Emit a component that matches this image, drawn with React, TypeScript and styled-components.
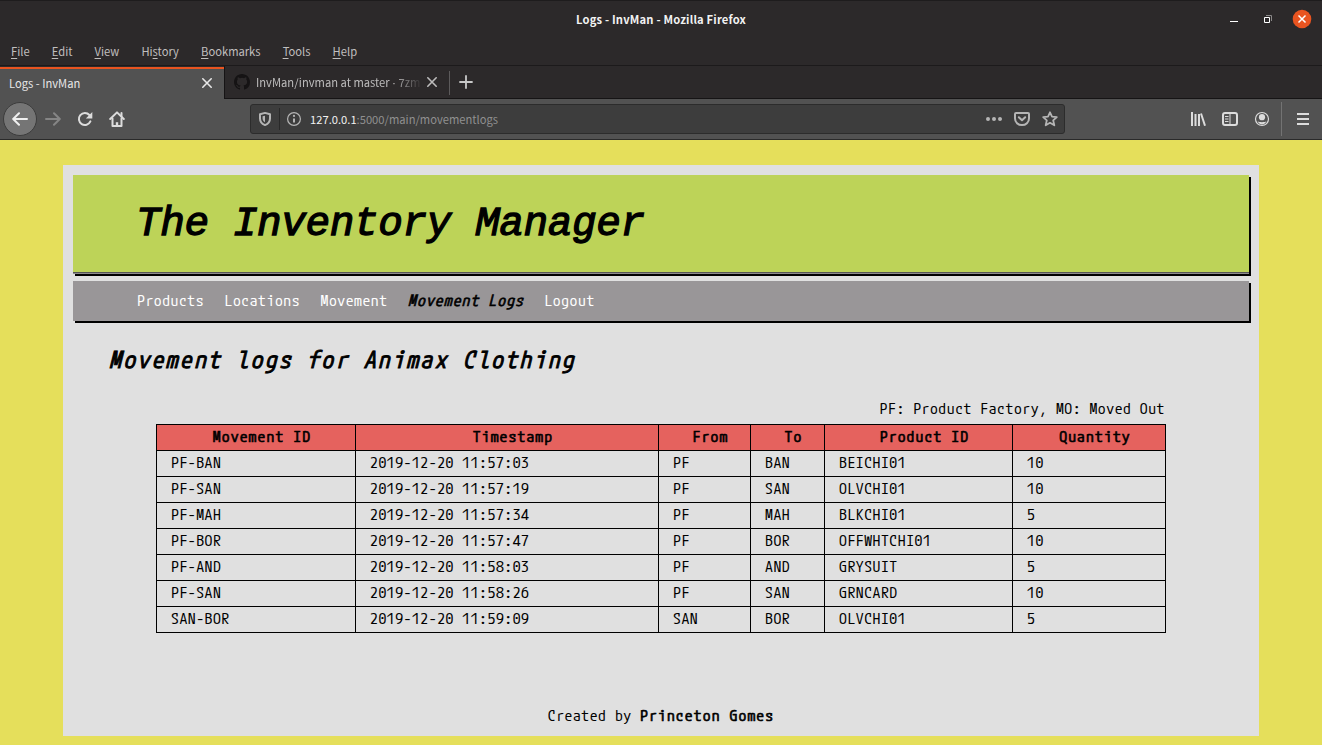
import React from "react";
import styled, { createGlobalStyle } from "styled-components";

const UI = `"Noto Sans CJK SC", "Open Sans", sans-serif`;
const MONO = `"M PLUS 1 Code", "Noto Sans Mono CJK SC", "Liberation Mono", monospace`;

const GlobalStyle = createGlobalStyle`
  * { box-sizing: border-box; }
  body { margin: 0; background: #e5df5b; overflow: hidden; }
`;

const Window = styled.div`
  height: 745px;
  display: flex;
  flex-direction: column;
  font-family: ${UI};
`;

/* ---------- window chrome ---------- */
const TitleBar = styled.header`
  height: 38px;
  background: #2c292a;
  border-top: 1px solid #1e1c1d;
  display: grid;
  grid-template-columns: 1fr auto 1fr;
  align-items: center;
  padding-bottom: 2px;
`;
const WindowTitle = styled.span`
  grid-column: 2;
  color: #f2f2f2;
  font-size: 11.2px;
  letter-spacing: 0.18px;
  font-weight: 700;
  line-height: 18px;
`;
const WindowButtons = styled.div`
  justify-self: end;
  display: flex;
  align-items: center;
  height: 100%;
  margin-right: 10px;
`;
const MenuBar = styled.nav`
  height: 28px;
  background: #2c292a;
  border-bottom: 1px solid #1c1a1b;
  display: flex;
  align-items: center;
  padding: 0 0 1px 11px;
  gap: 22.1px;
`;
const MenuItem = styled.span`
  color: #c0bfbf;
  font-size: 11.2px;
  line-height: 18px;
  u { text-underline-offset: 2px; }
`;
const TabStrip = styled.div`
  height: 33px;
  background: #2c292a;
  border-bottom: 1px solid #161415;
  display: flex;
`;
const Tab = styled.div<{ $active?: boolean }>`
  width: ${p => (p.$active ? 224 : 225)}px;
  height: 32px;
  flex: none;
  display: flex;
  align-items: center;
  justify-content: space-between;
  font-size: 11.2px;
  padding: 0 9px;
  padding-bottom: ${p => (p.$active ? 2 : 0)}px;
  color: ${p => (p.$active ? "#e8e8e8" : "#bdbcbc")};
  background: ${p => (p.$active ? "#525252" : "transparent")};
  box-shadow: ${p => (p.$active ? "0 1px #525252" : "none")};
  border-top: ${p => (p.$active ? "2px solid #e95420" : "0")};
  margin-top: ${p => (p.$active ? 1 : 0)}px;
  border-left: ${p => (p.$active ? "0" : "1px solid #161415")};
`;
const TabLabel = styled.span<{ $fade?: boolean }>`
  flex: 1;
  min-width: 0;
  white-space: nowrap;
  line-height: 18px;
  margin-left: ${p => (p.$fade ? 6 : 0)}px;
  ${p => p.$fade && "-webkit-mask-image: linear-gradient(to right, #000 82%, transparent 99%);"}
`;
const Dot = styled.span`
  font-family: "Open Sans", sans-serif;
`;
const NewTab = styled.div`
  display: flex;
  align-items: center;
  padding-left: 8px;
  height: 24px;
  margin-top: 5px;
  padding-bottom: 2px;
  border-left: 1px solid #5c5a5b;
`;
const Toolbar = styled.div`
  height: 41px;
  background: #525252;
  border-bottom: 1px solid #2a2a2a;
  display: flex;
  align-items: center;
`;
const NavButtons = styled.div`
  width: 250px;
  display: flex;
  align-items: center;
  gap: 16px;
  padding-left: 3px;
`;
const BackButton = styled.span`
  width: 34px;
  height: 34px;
  border-radius: 50%;
  background: #757575;
  border: 1px solid #3c3c3c;
  display: grid;
  place-items: center;
  margin-right: -8px;
`;
const UrlBar = styled.div`
  width: 815px;
  height: 30px;
  border-radius: 3px;
  background: #3d3d3d;
  border: 1px solid #2c2c2c;
  display: flex;
  align-items: center;
  padding: 0 6px;
`;
const UrlDivider = styled.i`
  width: 1px;
  height: 22px;
  background: #292929;
  margin: 0 6px;
`;
const UrlText = styled.span`
  flex: 1;
  margin-left: 8px;
  color: #909090;
  font-size: 11.2px;
  line-height: 18px;
  b { font-weight: 400; color: #f2f2f2; }
`;
const UrlActions = styled.div`
  display: flex;
  gap: 12px;
`;
const ToolButtons = styled.div`
  margin-left: auto;
  height: 34px;
  display: flex;
  align-items: center;
  gap: 16px;
`;
const MenuButton = styled.div`
  height: 34px;
  width: 41px;
  display: flex;
  align-items: center;
  padding-left: 13px;
  border-left: 1px solid #737373;
  margin-left: -5px;
`;
const Svg = styled.svg`
  display: block;
  flex: none;
`;

/* ---------- page ---------- */
const Page = styled.main`
  margin: 25px 63px 0;
  height: 571px;
  background: #e0e0e0;
  padding: 10px 10px 9px;
  display: flex;
  flex-direction: column;
  color: #000;
  font-family: ${MONO};
  font-size: 15.7px;
  letter-spacing: 0.55px;
  line-height: 24px;
`;
const Strong = styled.b`
  font-weight: 400;
  letter-spacing: 1.1px;
  -webkit-text-stroke: 0.6px currentColor;
`;
const Banner = styled.div`
  height: 99px;
  background: #bdd358;
  border-bottom: 1px solid #8e8b8e;
  box-shadow: inset 0 -1px #555, 2px 2px #000;
  padding: 21px 0 0 63px;
`;
const Title = styled.h1`
  margin: 0;
  font: italic 400 41px/56px "Liberation Mono", monospace;
  letter-spacing: -0.38px;
  -webkit-text-stroke: 1.3px currentColor;
`;
const NavBar = styled.nav`
  height: 40px;
  margin-top: 7px;
  padding: 0 0 2px 64px;
  display: flex;
  align-items: center;
  gap: 20.4px;
  background: #999698;
  box-shadow: 2px 2px #000;
`;
const NavLink = styled.a<{ $active?: boolean }>`
  color: ${p => (p.$active ? "#000" : "#fff")};
  ${p => p.$active && "font-style: italic; letter-spacing: 1.08px; -webkit-text-stroke: 0.6px currentColor;"}
`;
const Heading = styled.h2`
  margin: 22px 0 0 36px;
  font-size: 23.5px;
  font-weight: 400;
  font-style: italic;
  line-height: 32px;
  letter-spacing: 2.4px;
  -webkit-text-stroke: 0.9px currentColor;
`;
const Legend = styled.p`
  margin: 21px 84px 0 0;
  text-align: right;
`;
const Table = styled.table`
  margin: 4px 0 0 83px;
  width: 1009px;
  table-layout: fixed;
  border-collapse: collapse;
  th, td {
    height: 26px;
    border: 1px solid #000;
    padding: 0 0 2px 14px;
    text-align: left;
    line-height: 23px;
  }
  th {
    background: #e5625e;
    text-align: center;
    padding-right: 2px;
  }
`;
const Footer = styled.footer`
  margin-top: auto;
  text-align: center;
`;

const columns: [string, number][] = [
  ["Movement ID", 199], ["Timestamp", 303], ["From", 92], ["To", 74], ["Product ID", 188], ["Quantity", 153],
];
const rows = [
  ["PF-BAN", "2019-12-20 11:57:03", "PF", "BAN", "BEICHI01", "10"],
  ["PF-SAN", "2019-12-20 11:57:19", "PF", "SAN", "OLVCHI01", "10"],
  ["PF-MAH", "2019-12-20 11:57:34", "PF", "MAH", "BLKCHI01", "5"],
  ["PF-BOR", "2019-12-20 11:57:47", "PF", "BOR", "OFFWHTCHI01", "10"],
  ["PF-AND", "2019-12-20 11:58:03", "PF", "AND", "GRYSUIT", "5"],
  ["PF-SAN", "2019-12-20 11:58:26", "PF", "SAN", "GRNCARD", "10"],
  ["SAN-BOR", "2019-12-20 11:59:09", "SAN", "BOR", "OLVCHI01", "5"],
];

const Icon = ({ children, color = "#dcdcdc" }: { children: React.ReactNode; color?: string }) => (
  <Svg width={16} height={16} viewBox="0 0 16 16" fill="none" stroke={color} strokeWidth="2" strokeLinecap="round" strokeLinejoin="round">
    {children}
  </Svg>
);
const CloseIcon = ({ color }: { color: string }) => (
  <Icon color={color}><path d="M3.8 3.8l8.4 8.4M12.2 3.8l-8.4 8.4" strokeWidth="1.6" /></Icon>
);

export default function App() {
  return (
    <Window>
      <GlobalStyle />
      <TitleBar>
        <WindowTitle>Logs - InvMan - Mozilla Firefox</WindowTitle>
        <WindowButtons>
          <Svg width="84" height="20" viewBox="0 0 84 20">
            <path d="M2 12.5h8" stroke="#fff" />
            <path d="M38 6.5h5.5V12" stroke="#8a8888" fill="none" />
            <path d="M36.5 8.5h5v5h-5z" stroke="#fff" fill="none" />
            <circle cx="74" cy="10" r="9.3" fill="#e95420" />
            <path d="M70.5 6.5l7 7M77.5 6.5l-7 7" stroke="#fff" strokeWidth="1.5" />
          </Svg>
        </WindowButtons>
      </TitleBar>
      <MenuBar>
        <MenuItem><u>F</u>ile</MenuItem>
        <MenuItem><u>E</u>dit</MenuItem>
        <MenuItem><u>V</u>iew</MenuItem>
        <MenuItem>Hi<u>s</u>tory</MenuItem>
        <MenuItem><u>B</u>ookmarks</MenuItem>
        <MenuItem><u>T</u>ools</MenuItem>
        <MenuItem><u>H</u>elp</MenuItem>
      </MenuBar>
      <TabStrip>
        <Tab $active>
          <TabLabel>Logs - InvMan</TabLabel>
          <CloseIcon color="#e8e8e8" />
        </Tab>
        <Tab>
          <Svg width="16" height="16" viewBox="0 0 16 16" fill="#151314">
            <path d="M8 0C3.58 0 0 3.58 0 8c0 3.54 2.29 6.53 5.47 7.59.4.07.55-.17.55-.38 0-.19-.01-.82-.01-1.49-2.01.37-2.53-.49-2.69-.94-.09-.23-.48-.94-.82-1.13-.28-.15-.68-.52-.01-.53.63-.01 1.08.58 1.23.82.72 1.21 1.87.87 2.33.66.07-.52.28-.87.51-1.07-1.78-.2-3.64-.89-3.64-3.95 0-.87.31-1.59.82-2.15-.08-.2-.36-1.02.08-2.12 0 0 .67-.21 2.2.82a7.6 7.6 0 014 0c1.53-1.04 2.2-.82 2.2-.82.44 1.1.16 1.92.08 2.12.51.56.82 1.27.82 2.15 0 3.07-1.87 3.75-3.65 3.95.29.25.54.73.54 1.48 0 1.07-.01 1.93-.01 2.2 0 .21.15.46.55.38A8.01 8.01 0 0016 8c0-4.42-3.58-8-8-8z" />
          </Svg>
          <TabLabel $fade>InvMan/invman at master<Dot> · </Dot>7zm</TabLabel>
          <CloseIcon color="#bdbcbc" />
        </Tab>
        <NewTab>
          <Icon color="#c8c8c8"><path d="M8 2v12M2 8h12" strokeWidth="1.8" /></Icon>
        </NewTab>
      </TabStrip>
      <Toolbar>
        <NavButtons>
          <BackButton><Icon color="#f0f0f0"><path d="M15 8H1.5M7 2.2L1.2 8 7 13.8" /></Icon></BackButton>
          <Icon color="#858585"><path d="M1 8h13.5M9 2.2L14.8 8 9 13.8" /></Icon>
          <Icon>
            <path d="M13.4 10.4A6 6 0 1 1 12.4 4" />
            <path d="M15.3 1v6.5H8.8z" fill="#dcdcdc" stroke="none" />
          </Icon>
          <Icon>
            <path d="M1.2 8L8 1.4 14.8 8" />
            <path d="M3.5 7.5V15h9V7.5" />
            <path d="M12.5 2v3.5" />
            <path d="M8 15v-3.8" strokeWidth="2.4" strokeLinecap="butt" />
          </Icon>
        </NavButtons>
        <UrlBar>
          <Icon color="#b5b5b5">
            <path d="M8 1.9l5 1.3v4.3c0 3.3-2 5.4-5 6.6-3-1.2-5-3.3-5-6.6V3.2z" />
            <path d="M8 4.8v6.4C6.2 10.2 5.6 9 5.6 7.2V5.3z" fill="#b5b5b5" stroke="none" />
          </Icon>
          <UrlDivider />
          <Icon color="#b5b5b5">
            <circle cx="8" cy="8" r="6.4" strokeWidth="1.2" />
            <path d="M8 7.5v4" strokeLinecap="butt" />
            <circle cx="8" cy="4.9" r="1.1" fill="#b5b5b5" stroke="none" />
          </Icon>
          <UrlText><b>127.0.0.1</b>:5000/main/movementlogs</UrlText>
          <UrlActions>
            <Icon color="#b5b5b5">
              <path d="M2 8h.01M8 8h.01M14 8h.01" strokeWidth="4" />
            </Icon>
            <Icon color="#b5b5b5">
              <path d="M2 2h12a1 1 0 0 1 1 1v4.5a7 6.6 0 0 1-14 0V3a1 1 0 0 1 1-1z" />
              <path d="M4.8 6.2L8 9.3l3.2-3.1" />
            </Icon>
            <Icon color="#b5b5b5">
              <path d="M8 1.3l2 4.4 4.8.5-3.6 3.2 1.1 4.9L8 11.8l-4.3 2.5 1.1-4.9L1.2 6.2 6 5.7z" strokeWidth="1.8" />
            </Icon>
          </UrlActions>
        </UrlBar>
        <ToolButtons>
          <Icon>
            <path d="M2 1v14M5.5 3v12M9 3v12M11 2.5l4 12.3" strokeLinecap="butt" />
          </Icon>
          <Icon>
            <rect x="1" y="2" width="14" height="12" rx="2" />
            <path d="M8 2v12" strokeWidth="1" />
            <path d="M3 5.5h3.5M3 8h3.5M3 10.5h3.5" strokeWidth="1" strokeLinecap="butt" />
          </Icon>
          <Icon>
            <circle cx="8" cy="8" r="6.5" strokeWidth="1.2" />
            <circle cx="8" cy="6.2" r="3.1" fill="#dcdcdc" stroke="none" />
            <path d="M3.6 10.3c1 .6 2.6.9 4.4.9s3.4-.3 4.4-.9c-.7 2-2.3 3.2-4.4 3.2s-3.7-1.2-4.4-3.2z" fill="#dcdcdc" stroke="none" />
          </Icon>
          <MenuButton>
            <Icon><path d="M2 3h12M2 8h12M2 13h12" strokeLinecap="butt" /></Icon>
          </MenuButton>
        </ToolButtons>
      </Toolbar>
      <Page>
        <Banner><Title>The Inventory Manager</Title></Banner>
        <NavBar>
          <NavLink>Products</NavLink>
          <NavLink>Locations</NavLink>
          <NavLink>Movement</NavLink>
          <NavLink $active>Movement Logs</NavLink>
          <NavLink>Logout</NavLink>
        </NavBar>
        <Heading>Movement logs for Animax Clothing</Heading>
        <Legend>PF: Product Factory, MO: Moved Out</Legend>
        <Table>
          <colgroup>{columns.map(([name, w]) => <col key={name} width={w} />)}</colgroup>
          <thead><tr>{columns.map(([name]) => <th key={name}><Strong>{name}</Strong></th>)}</tr></thead>
          <tbody>
            {rows.map((r, i) => <tr key={i}>{r.map((c, j) => <td key={j}>{c}</td>)}</tr>)}
          </tbody>
        </Table>
        <Footer>Created by <Strong>Princeton Gomes</Strong></Footer>
      </Page>
    </Window>
  );
}
